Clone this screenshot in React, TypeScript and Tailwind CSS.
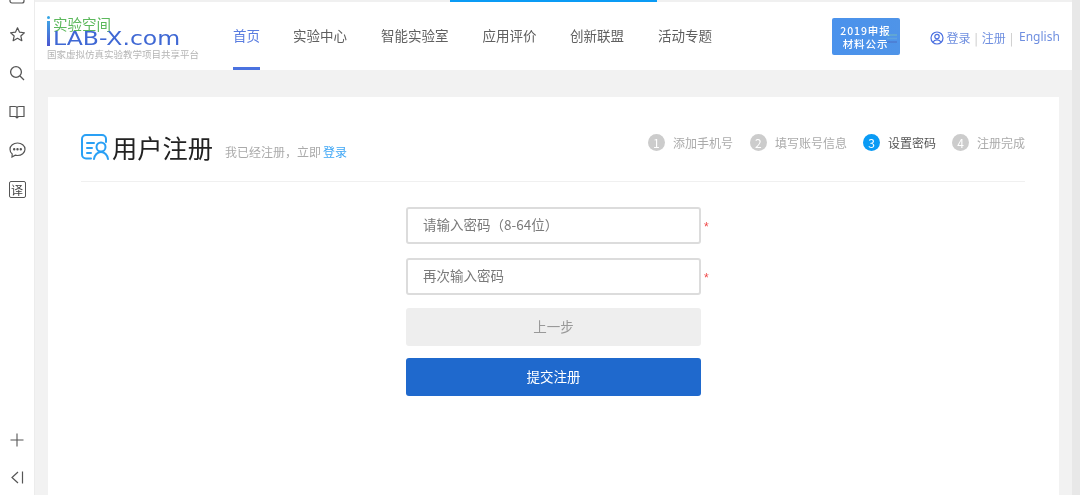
import React from "react";

function Step({ n, label, active, className }: { n: number; label: string; active?: boolean; className?: string }) {
  return (
    <div className={"flex items-center " + (className || "")}>
      <span className={"w-[17px] h-[17px] rounded-full text-white text-[12px] leading-none flex items-center justify-center " + (active ? "bg-[#0a9bf5]" : "bg-[#cccccc]")}>{n}</span>
      <span className={"ml-[8px] text-[12px] leading-none whitespace-nowrap " + (active ? "text-[#555555]" : "text-[#aaaaaa]")}>{label}</span>
    </div>
  );
}

function Field({ placeholder, className }: { placeholder: string; className?: string }) {
  return (
    <div className={"relative " + (className || "")}>
      <div className="h-[37px] border-2 border-[#dcdcdc] rounded-[3px] bg-white flex items-center pl-[15px] pb-[2px] text-[13.5px] text-[#7a7a7a]">{placeholder}</div>
      <span className="absolute left-[298px] top-[14px] text-[12px] leading-none text-[#f04848] font-['Liberation_Sans',sans-serif]">*</span>
    </div>
  );
}

const navItems = [
  { t: "实验中心", w: "ml-[33px]" },
  { t: "智能实验室", w: "ml-[34px]" },
  { t: "应用评价", w: "ml-[34px]" },
  { t: "创新联盟", w: "ml-[33.5px]" },
  { t: "活动专题", w: "ml-[34px]" },
];

export default function App() {
  return (
    <div className="w-[1080px] h-[495px] overflow-hidden flex bg-white blur-[0.35px] font-['Noto_Sans_CJK_SC','Noto_Sans',sans-serif]">
      {/* Left tool rail */}
      <aside className="w-[34px] shrink-0 h-full bg-white flex flex-col items-center text-[#555555] overflow-hidden">
        <svg className="mt-[-11px] shrink-0" width="16" height="15" viewBox="0 0 16 15" fill="none" stroke="#555" strokeWidth="1.2"><rect x="1" y="1" width="14" height="13" rx="2" /></svg>
        <svg className="mt-[22px] shrink-0" width="17" height="17" viewBox="0 0 24 24" fill="none" stroke="#555" strokeWidth="1.7" strokeLinejoin="round"><path d="M12 2.5l2.9 6.2 6.8.8-5 4.600 1.400 6.700-6.100-3.400-6.100 3.400 1.400-6.700-5-4.600 6.800-.8z" /></svg>
        <svg className="mt-[22px] shrink-0" width="16" height="16" viewBox="0 0 16 16" fill="none" stroke="#555" strokeWidth="1.3"><circle cx="7" cy="7" r="5.4" /><path d="M11 11l4 4" /></svg>
        <svg className="mt-[24px] shrink-0" width="16" height="15" viewBox="0 0 16 15" fill="none" stroke="#555" strokeWidth="1.2"><path d="M1 1.500h5c1 0 2 .5 2 1.500 0-1 1-1.500 2-1.500h5v10h-5.500L8 13l-1.500-1.500H1zM8 3v9" /></svg>
        <svg className="mt-[22px] shrink-0" width="17" height="16" viewBox="0 0 17 16" fill="none" stroke="#555" strokeWidth="1.2"><path d="M8.500 1c4 0 7.500 2.600 7.500 6.300s-3.500 6.200-7.500 6.200c-.8 0-1.600-.1-2.300-.3L3 15l.2-3C1.700 10.900 1 9.200 1 7.300 1 3.600 4.500 1 8.500 1z" /><circle cx="5.200" cy="7.300" r=".6" fill="#555" /><circle cx="8.500" cy="7.300" r=".6" fill="#555" /><circle cx="11.800" cy="7.300" r=".6" fill="#555" /></svg>
        <div className="mt-[23px] shrink-0 w-[17px] h-[17px] border border-[#555555] rounded-[2px] flex items-center justify-center text-[12px] leading-none text-[#444444]">译</div>
        <svg className="mt-auto shrink-0" width="14" height="14" viewBox="0 0 14 14" stroke="#555" strokeWidth="1.1"><path d="M7 .5v13M.5 7h13" /></svg>
        <svg className="mt-[24px] mb-[11px] shrink-0" width="13" height="13" viewBox="0 0 13 13" fill="none" stroke="#555" strokeWidth="1.2"><path d="M7 1L1 6.500 7 12M11.500 .5v12" /></svg>
      </aside>

      {/* Main */}
      <div className="flex-1 min-w-0 flex border-l border-[#ececec]">
        <div className="flex-1 min-w-0 h-full flex flex-col bg-[#f2f2f2]">
          {/* top strip */}
          <div className="h-[2px] shrink-0 bg-[#f0f0f0] flex">
            <div className="ml-[415px] w-[207px] bg-[#0a9bf5]" />
          </div>
          {/* header */}
          <header className="h-[68px] shrink-0 bg-white flex items-start">
            {/* logo */}
            <div className="ml-[12px] w-[152px] shrink-0 flex flex-col mt-[14px]">
              <div className="flex h-[31px]">
                <div className="w-[3px] mr-[3px] flex flex-col">
                  <span className="h-[3px] w-[3px] rounded-full bg-[#35a5e5]" />
                  <span className="mt-[2px] w-[3px] h-[25px] bg-gradient-to-b from-[#3fa0e4] to-[#4a55d0]" />
                </div>
                <div className="flex flex-col">
                  <span className="text-[14.5px] leading-[15px] text-[#5cb85c] whitespace-nowrap">实验空间</span>
                  <span className="text-[19px] leading-[14px] h-[14px] font-['DejaVu_Sans',sans-serif] origin-left scale-x-[1.24] whitespace-nowrap text-[#3f68d4]">LAB-X.com</span>
                </div>
              </div>
              <div className="text-[9.5px] leading-[12px] mt-[1px] text-[#b5b5b5] whitespace-nowrap">国家虚拟仿真实验教学项目共享平台</div>
            </div>
            {/* nav */}
            <nav className="ml-[34px] flex h-full items-center text-[13.5px] text-[#5f5f5f]">
              <a className="relative h-full flex items-center text-[#5a7de0] whitespace-nowrap pb-[2px]">
                首页
                <span className="absolute left-0 right-0 bottom-0 h-[3px] bg-[#4a72e0]" />
              </a>
              {navItems.map((n) => (
                <a key={n.t} className={n.w + " mb-[2px] whitespace-nowrap"}>{n.t}</a>
              ))}
            </nav>
            {/* banner */}
            <div className="relative ml-[119.5px] mt-[16px] w-[68px] h-[37px] shrink-0 rounded-[2px] bg-gradient-to-r from-[#4a92ec] to-[#4f94e8] flex flex-col items-center justify-center text-white font-medium text-[10.5px] leading-[13px] tracking-[0.9px]">
              <span className="whitespace-nowrap">2019申报</span>
              <span className="whitespace-nowrap">材料公示</span>
              <svg className="absolute right-[2px] top-[15px] opacity-50" width="12" height="13" viewBox="0 0 12 13" fill="none" strokeWidth="1.5">
                <path d="M1 2h10" stroke="#7fc4b0" />
                <path d="M1 5.500h10" stroke="#6fb0d8" />
                <path d="M1 9h10" stroke="#4a63b8" />
              </svg>
            </div>
            {/* auth */}
            <div className="ml-[30px] mt-[26px] flex items-center text-[12px] leading-[20px] text-[#6f8fe0] whitespace-nowrap">
              <svg width="14" height="14" viewBox="0 0 14 14" fill="none" stroke="#4a6fe0" strokeWidth="1.2"><circle cx="7" cy="7" r="6" /><circle cx="7" cy="5.600" r="2.200" /><path d="M3 11.200c.8-1.700 2.200-2.400 4-2.400s3.200.7 4 2.400" /></svg>
              <span className="ml-[3px]">登录</span>
              <span className="mx-[4px] text-[#c4c4c4]">|</span>
              <span>注册</span>
              <span className="ml-[4px] mr-[6px] text-[#c4c4c4]">|</span>
              <span className="font-['Noto_Sans',sans-serif] mt-[-2px]">English</span>
            </div>
          </header>

          {/* card */}
          <main className="flex-1 min-h-0 pt-[27px] pl-[13px] pr-[13px]">
            <div className="h-[420px] bg-white pl-[33px] pr-[34px]">
              <div className="h-[85px] border-b border-[#f0f0f0] flex items-start">
                <svg className="mt-[37px] shrink-0" width="30" height="27" viewBox="0 0 30 27" fill="none" stroke="#2aa0f5" strokeWidth="2" strokeLinecap="round">
                  <path d="M10 24.500H5c-2.200 0-4-1.800-4-4V5c0-2.200 1.800-4 4-4h16c2.200 0 4 1.800 4 4v3" />
                  <path d="M6 9h7M6 14h5M6 19h4" />
                  <circle cx="20" cy="13" r="4.500" />
                  <path d="M13 25c.5-4 3.500-7 7-7s6.500 3 7 7" />
                </svg>
                <h1 className="mt-[32px] ml-[1px] text-[25.25px] leading-[36px] text-[#222222] font-normal whitespace-nowrap">用户注册</h1>
                <span className="mt-[47px] ml-[12px] text-[12px] leading-[16px] text-[#aaaaaa] whitespace-nowrap">我已经注册，立即<span className="ml-[2px] text-[#3ea6f5]">登录</span></span>
                <div className="ml-auto mt-[37px] flex items-center">
                  <Step n={1} label="添加手机号" />
                  <Step n={2} label="填写账号信息" className="ml-[17px]" />
                  <Step n={3} label="设置密码" active className="ml-[16px]" />
                  <Step n={4} label="注册完成" className="ml-[16px]" />
                </div>
              </div>
              <div className="w-[295px] ml-[325px] mt-[25px]">
                <Field placeholder="请输入密码（8-64位）" />
                <Field placeholder="再次输入密码" className="mt-[14px]" />
                <button className="mt-[13px] w-full h-[38px] pb-[2px] rounded-[3px] bg-[#eeeeee] text-[13.5px] text-[#999999]">上一步</button>
                <button className="mt-[12px] w-full h-[38px] pb-[2px] rounded-[3px] bg-[#1f69cd] text-[13.5px] text-white">提交注册</button>
              </div>
            </div>
          </main>
        </div>
        {/* scrollbar */}
        <div className="w-[8px] shrink-0 h-full bg-[#e8e8e8]" />
      </div>
    </div>
  );
}
